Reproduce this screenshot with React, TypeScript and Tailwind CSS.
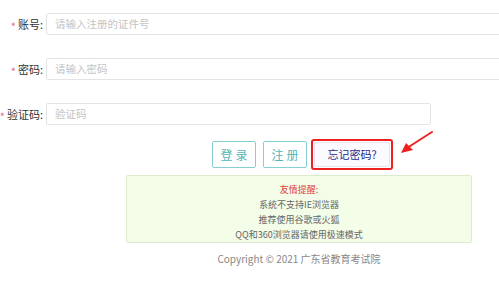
import React from 'react';

const font = { fontFamily: '"Noto Sans CJK SC", "Liberation Sans", sans-serif' };

interface RowProps {
  label: string;
  placeholder: string;
  width: string;
}

const FormRow: React.FC<RowProps> = ({ label, placeholder, width }) => (
  <div className="flex items-center h-[22px]">
    <div className="w-[46px] shrink-0 pr-[3px] flex justify-end items-center text-[11px] text-[#333] whitespace-nowrap">
      <span className="text-[#e07088] mr-[2px] text-[11px] translate-y-[2px]">*</span>
      {label}:
    </div>
    <div
      className={`${width} h-[22px] shrink-0 border border-[#e4e4e4] rounded-[2px] bg-white flex items-center pl-[8px] text-[10.5px] text-[#c4c4c4]`}
    >
      {placeholder}
    </div>
  </div>
);

export default function App() {
  return (
    <div className="relative w-[499px] h-[286px] overflow-hidden bg-white" style={font}>
      <div className="flex flex-col pt-[13px] gap-[23px]">
        <FormRow label="账号" placeholder="请输入注册的证件号" width="w-[470px]" />
        <FormRow label="密码" placeholder="请输入密码" width="w-[470px]" />
        <FormRow label="验证码" placeholder="验证码" width="w-[385px]" />
      </div>

      <div className="flex items-center ml-[212px] mt-[14px] h-[31px]">
        <button className="w-[44px] h-[27px] border border-[#88d0d0] rounded-[2px] bg-white text-[#55b5b5] text-[12px] tracking-[3px] pl-[3px]">
          登录
        </button>
        <button className="ml-[7px] w-[44px] h-[27px] border border-[#88d0d0] rounded-[2px] bg-white text-[#55b5b5] text-[12px] tracking-[3px] pl-[3px]">
          注册
        </button>
        <div className="ml-[4px] w-[82px] h-[31px] border-2 border-[#f02020] rounded-[3px] p-[1px] flex">
          <button className="flex-1 border border-[#e4e4f0] rounded-[2px] bg-[#fbfbff] text-[#2a2a88] text-[11px]">
            忘记密码?
          </button>
        </div>
      </div>

      <div className="ml-[126px] mt-[5px] w-[346px] h-[68px] border border-[#dfeccc] rounded-[2px] bg-[#f3fde8] flex flex-col items-center pt-[6px] text-[9px] leading-[15px] text-[#666]">
        <span className="text-[#e04040]">友情提醒:</span>
        <span>系统不支持IE浏览器</span>
        <span>推荐使用谷歌或火狐</span>
        <span>QQ和360浏览器请使用极速模式</span>
      </div>

      <div className="w-[346px] ml-[126px] mt-[8px] text-center text-[10px] text-[#888]">
        Copyright © 2021 广东省教育考试院
      </div>

      <svg className="absolute left-[398px] top-[130px]" width="36" height="26" viewBox="0 0 36 26">
        <line x1="34" y1="2" x2="9" y2="18" stroke="#f02020" strokeWidth="2" strokeLinecap="round" />
        <polygon points="3,23 8,13 15,20" fill="#f02020" />
      </svg>
    </div>
  );
}
